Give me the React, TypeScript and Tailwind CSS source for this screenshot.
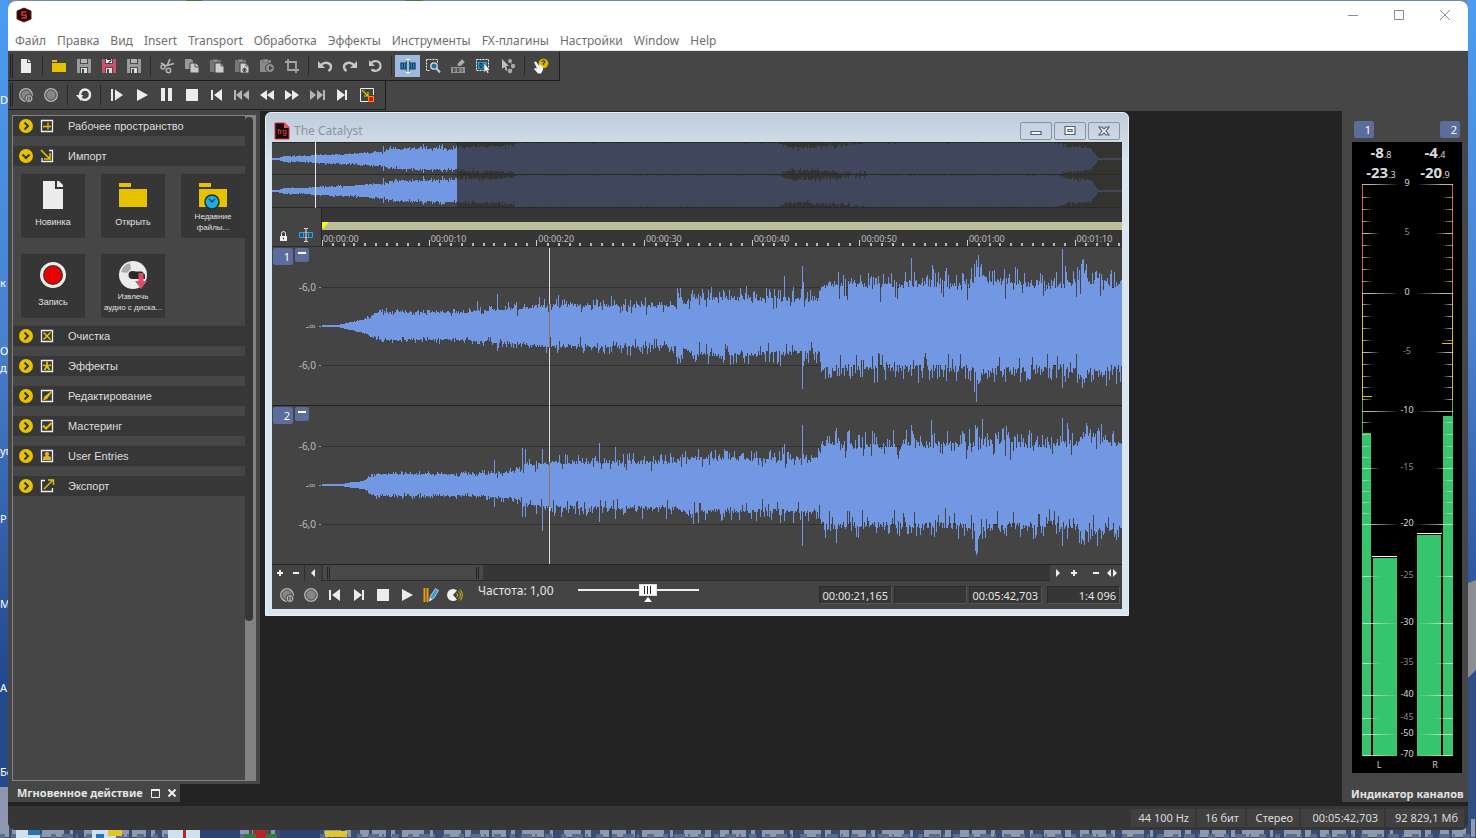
import { useState } from 'react';
import type { ReactNode } from 'react';

const UI = 'font-["Noto_Sans","Open_Sans",sans-serif]';

/* ---------- icons ---------- */

function Icon({ children, size = 16 }: { children: ReactNode; size?: number }) {
  return (
    <svg width={size} height={size} viewBox="0 0 16 16" fill="none" aria-hidden="true" className="shrink-0">
      {children}
    </svg>
  );
}

const NewFile = () => (
  <Icon>
    <path d="M3 1h6v4h4v10H3z" fill="#ececec" />
    <path d="M10 1l3 3h-3z" fill="#ececec" />
  </Icon>
);

const Folder = () => (
  <Icon>
    <path d="M1 2h5v2H1zM1 5h14v9H1z" fill="#e6c200" />
  </Icon>
);

const Floppy = ({ color = '#9b9b9b', mark = false }: { color?: string; mark?: boolean }) => (
  <Icon>
    <path d="M1 1h14v14H1z" fill={color} />
    <path d="M4 1h8v5H4zM4 9h8v6H4z" fill="#4a4a4a" />
    <path d="M5 1h6v4H5z" fill={mark ? '#fff' : '#b5b5b5'} />
    <path d="M5 10h6v5H5z" fill="#ddd" />
    <path d="M6 11h2v4H6z" fill="#444" />
    {mark && <path d="M6 1.500h4v2H8V6" stroke="#222" />}
  </Icon>
);

const Cut = () => (
  <Icon>
    <path d="M8 8L11 1M6 8l9-2.500M7 8L2 5" stroke="#b4b4b4" strokeWidth="1.800" />
    <circle cx="4" cy="9" r="2" stroke="#b4b4b4" strokeWidth="1.500" />
    <circle cx="9.500" cy="12.500" r="2.200" stroke="#b4b4b4" strokeWidth="1.500" />
  </Icon>
);

const Copy = () => (
  <Icon>
    <path d="M1 1h6l2 2v8H1z" fill="#999" />
    <path d="M6 5h6l3 3v7H6z" fill="#c9c9c9" stroke="#444" />
    <path d="M11 5v4h4" stroke="#555" />
  </Icon>
);

const Paste = ({ kind }: { kind?: 'special' | 'play' }) => (
  <Icon>
    <path d="M1 2h3V1h5v1h3v12H1z" fill={kind === 'play' ? '#8a8a8a' : '#777'} />
    <path d="M4 2h5v2H4z" fill="#aaa" stroke="#444" strokeWidth=".5" />
    {kind !== 'play' && <path d="M6 5h6l3 3v7H6z" fill="#cfcfcf" stroke="#444" />}
    {kind !== 'play' && <path d="M12 5v3h3" stroke="#555" />}
    {kind === 'special' && <path d="M8 12h5M10.500 9.500v5M9 10l3 4M12 10l-3 4" stroke="#333" strokeWidth=".8" />}
    {kind === 'play' && <circle cx="11" cy="10" r="4.500" fill="#8f8f8f" stroke="#444" />}
    {kind === 'play' && <path d="M10 7.500v5l4-2.500z" fill="#444" />}
  </Icon>
);

const Crop = () => (
  <Icon>
    <path d="M4 1v11h11M1 4h11v11" stroke="#a4a4a4" strokeWidth="1.800" />
  </Icon>
);

const Undo = ({ flip = false }: { flip?: boolean }) => (
  <Icon>
    <g transform={flip ? 'matrix(-1 0 0 1 16 0)' : undefined}>
      <path d="M1 3v7h7z" fill="#c6c6c6" />
      <path d="M4 7c4-4 10-2 10 2 0 2-1 3-2.500 4" stroke="#c6c6c6" strokeWidth="2.400" />
    </g>
  </Icon>
);

const Revert = () => (
  <Icon>
    <path d="M2 2v6h6z" fill="#c6c6c6" />
    <path d="M4.500 5C7 1.500 13.500 3 13.500 8S8 14 4.500 11.500" stroke="#c6c6c6" strokeWidth="2.200" />
  </Icon>
);

const Loop = () => (
  <Icon>
    <path d="M0 8h7l-2 6z" fill="#ececec" />
    <path d="M4 8c0-7.500 10-7 10-.5 0 5-5 6.500-8.500 4.500" stroke="#ececec" strokeWidth="2.400" />
  </Icon>
);

const EditTool = () => (
  <Icon>
    <path d="M1 5h5v6H1zM10 5h5v6h-5z" fill="#1d8fd6" stroke="#16344c" strokeWidth="1.200" />
    <path d="M6 5h4v6H6z" fill="#1d8fd6" />
    <path d="M3.500 6v4M12.500 6v4" stroke="#16344c" strokeWidth="1.200" />
    <path d="M8 2v12" stroke="#16344c" strokeWidth="3" />
    <path d="M6 1.500h1.500L8 2l.5-.5H10M8 2v12M6 14.500h1.500L8 14l.5.5H10" stroke="#fff" strokeWidth="1.300" />
  </Icon>
);

const MagnifyTool = () => (
  <Icon>
    <path d="M1.500 1.500h11v4M1.500 1.500v11h4" stroke="#eee" strokeDasharray="2 1" />
    <circle cx="9" cy="8" r="3.200" fill="#1f6f95" stroke="#dcdcdc" strokeWidth="1.300" />
    <path d="M11.500 10.500L15 14.500" stroke="#a8cfdf" strokeWidth="2" />
  </Icon>
);

const PencilTool = () => (
  <Icon>
    <path d="M1 9h14v6H1z" fill="#929292" />
    <path d="M3.500 10.500v3h1.500v-3zM7.500 10.500v3h1.500v-3zM12 10v4" stroke="#444" />
    <path d="M7 8l1-3 4-4 3 3-4 4z" fill="#adadad" stroke="#444" strokeWidth=".5" />
  </Icon>
);

const EventTool = () => (
  <Icon>
    <path d="M1.500 1.500h12v11h-12z" stroke="#f2f2f2" strokeDasharray="2 1" />
    <path d="M3 4h9v7H3z" fill="#1f9ad6" />
    <path d="M5 5.500v4h2v-4z" stroke="#103040" />
    <path d="M9 5v9.500l2-2 1.500 3 1.500-1-1.500-2.500H15z" fill="#fff" stroke="#333" strokeWidth=".5" />
  </Icon>
);

const EnvelopeTool = () => (
  <Icon>
    <path d="M2 1v10l2.500-2L6 13l1.500-1L6 8h3z" fill="#c0c0c0" />
    <path d="M9 3l3 3 2 2-3 4" stroke="#888" />
    <circle cx="10" cy="3" r="2" fill="#aaa" />
    <circle cx="13" cy="8" r="2.200" fill="#aaa" />
    <circle cx="10" cy="13" r="2.200" fill="#aaa" />
  </Icon>
);

const HelpTool = () => (
  <Icon>
    <circle cx="10.500" cy="5.500" r="4.800" fill="#d9ba00" />
    <path d="M9 4c0-2 3.200-1.800 3 0L10.500 5.500V7" stroke="#40391a" strokeWidth="1.200" />
    <path d="M1 4l2-.5 3 4 1-1 3 2.500v3L8 15.500H5L1 11l1-1 2 .5z" fill="#f3f3f3" />
  </Icon>
);

const RecordDot = ({ paused = false }: { paused?: boolean }) => (
  <Icon>
    <circle cx="8" cy="8" r="6.300" fill="#868686" stroke="#b4b4b4" strokeWidth="1.300" />
    <circle cx="8" cy="8" r="5" stroke="#555" />
    {paused && <circle cx="11" cy="11.500" r="4" fill="#b4b4b4" stroke="#444" />}
    {paused && <path d="M9.800 9.500v4M12.200 9.500v4" stroke="#444" strokeWidth="1.200" />}
  </Icon>
);

const shapes: Record<string, string> = {
  playAll: 'M2 2h2v12H2zM6 2.500v11L14 8z',
  play: 'M3 2v12l11-6z',
  pause: 'M2 1h4v13H2zM9 1h4v13H9z',
  stop: 'M2 2h12v12H2z',
  start: 'M2 3h2v10H2zM13 2v12L5 8z',
  prev: 'M0 3h2v10H0zM8 3v10L2 8zM15 3v10L9 8z',
  rewind: 'M8 3v10L1 8zM15 3v10L8 8z',
  forward: 'M1 3v10l7-5zM8 3v10l7-5z',
  next: 'M1 3v10l6-5zM8 3v10l6-5zM14 3h2v10h-2z',
  end: 'M3 2v12l8-6zM11 3h2v10h-2z',
};

const Shape = ({ name, color = '#ececec' }: { name: string; color?: string }) => (
  <Icon>
    <path d={shapes[name]} fill={color} />
  </Icon>
);

const PlayMode = () => (
  <Icon>
    <path d="M1.500 8V1.500h13V8M1.500 8v6.500H9" stroke="#eee" />
    <path d="M3 3l6 6M9 5v4H5" stroke="#e6c200" strokeWidth="1.200" />
    <path d="M9.500 9.500h5v5h-5z" fill="#f00" stroke="#f2a000" />
  </Icon>
);

const Pencils = () => (
  <Icon>
    <path d="M1.500 1v14M4.500 1v14" stroke="#e89a12" strokeWidth="2" />
    <path d="M6.500 14l1-5 5-7.500 3 2L11 11z" fill="#3d9fd6" stroke="#dfeaf0" strokeWidth=".7" />
    <path d="M6.500 14l.5-3 2 1.500z" fill="#fff" />
  </Icon>
);

const Scrub = () => (
  <Icon>
    <path d="M10 3.500A6 6 0 1 0 10 12.500L6 8z" fill="#f0f0f0" />
    <path d="M9.500 6c1.500 1 1.500 3 0 4M11.500 4c2.500 2 2.500 6 0 8M13 2.500c3 3 3 8 0 11" stroke="#d9ba00" />
  </Icon>
);

/* ---------- toolbars ---------- */

type Tool = { label: string; icon: ReactNode; active?: boolean } | 'sep';

const mainTools: Tool[] = [
  { label: 'Новый', icon: <NewFile /> },
  'sep',
  { label: 'Открыть', icon: <Folder /> },
  { label: 'Сохранить', icon: <Floppy /> },
  { label: 'Сохранить как', icon: <Floppy color="#d2506c" mark /> },
  { label: 'Сохранить все', icon: <Floppy /> },
  'sep',
  { label: 'Вырезать', icon: <Cut /> },
  { label: 'Копировать', icon: <Copy /> },
  { label: 'Вставить', icon: <Paste /> },
  { label: 'Вставить особо', icon: <Paste kind="special" /> },
  { label: 'Воспроизвести буфер', icon: <Paste kind="play" /> },
  { label: 'Обрезать', icon: <Crop /> },
  'sep',
  { label: 'Отменить', icon: <Undo /> },
  { label: 'Вернуть', icon: <Undo flip /> },
  { label: 'Повторить', icon: <Revert /> },
  'sep',
  { label: 'Редактирование', icon: <EditTool />, active: true },
  { label: 'Масштаб', icon: <MagnifyTool /> },
  { label: 'Карандаш', icon: <PencilTool /> },
  { label: 'Событие', icon: <EventTool /> },
  { label: 'Огибающая', icon: <EnvelopeTool /> },
  'sep',
  { label: 'Что это?', icon: <HelpTool /> },
];

const transportTools: Tool[] = [
  { label: 'Подготовить запись', icon: <RecordDot paused /> },
  { label: 'Запись', icon: <RecordDot /> },
  'sep',
  { label: 'Повтор', icon: <Loop /> },
  'sep',
  { label: 'Воспроизвести всё', icon: <Shape name="playAll" /> },
  { label: 'Воспроизвести', icon: <Shape name="play" /> },
  { label: 'Пауза', icon: <Shape name="pause" /> },
  { label: 'Стоп', icon: <Shape name="stop" /> },
  { label: 'В начало', icon: <Shape name="start" /> },
  { label: 'Предыдущий', icon: <Shape name="prev" color="#b5b5b5" /> },
  { label: 'Назад', icon: <Shape name="rewind" /> },
  { label: 'Вперёд', icon: <Shape name="forward" /> },
  { label: 'Следующий', icon: <Shape name="next" color="#b5b5b5" /> },
  { label: 'В конец', icon: <Shape name="end" /> },
  { label: 'Режим', icon: <PlayMode /> },
];

function Toolbar({ tools }: { tools: Tool[] }) {
  return (
    <div role="toolbar" className="flex h-[29px] w-fit items-center border-r border-b border-[#1e1e1e] bg-[#444] pr-1.5">
      <div className="ml-0.5 h-6 w-[3px] border-x border-[#222]" />
      {tools.map((tool, i) =>
        tool === 'sep' ? (
          <div key={i} className="flex w-2 justify-center">
            <div className="h-5 w-px bg-[#2a2a2a]" />
          </div>
        ) : (
          <button
            key={i}
            aria-label={tool.label}
            className={`flex h-[22px] w-[25px] items-center justify-center ${tool.active ? 'bg-[#9db9de]' : ''}`}
          >
            {tool.icon}
          </button>
        )
      )}
    </div>
  );
}

/* ---------- left panel ---------- */

const sectionMarks: Record<string, ReactNode> = {
  workspace: <path d="M4 8.500h8M9 4.500v7" stroke="#e6c200" strokeWidth="1.300" />,
  clean: <path d="M4.500 4.500l7 7M11.500 4.500l-7 7" stroke="#e6c200" strokeWidth="1.500" />,
  fx: <path d="M8 3.500v5M8 8L4 7M8 8l4-1M8 8l-2.500 4M8 8l2.500 4" stroke="#e6c200" strokeWidth="1.800" />,
  edit: <path d="M4 12.500l1.500-4L12.500 3 13 4l-5 7z" fill="#e6c200" />,
  master: <path d="M4 7.500l3 3L12.500 5" stroke="#e6c200" strokeWidth="2" />,
  user: <path d="M8 4a2 2 0 0 1 1 3.800L12 9v3H4V9l3-1.200A2 2 0 0 1 8 4z" fill="#e0b030" />,
};

function SectionIcon({ kind }: { kind: string }) {
  if (kind === 'import') {
    return (
      <Icon>
        <path d="M10 2.500h3.500v11H3V10" stroke="#eee" strokeWidth="1.300" />
        <path d="M2 2l8.500 8.500M11 5v6H5" stroke="#e6c200" strokeWidth="1.600" />
      </Icon>
    );
  }
  if (kind === 'export') {
    return (
      <Icon>
        <path d="M6 2.500H2.500v11h11V10" stroke="#eee" strokeWidth="1.300" />
        <path d="M5 11l9-9M9 2h5.500v5" stroke="#e6c200" strokeWidth="1.400" />
      </Icon>
    );
  }
  return (
    <Icon>
      <path d="M2.500 2.500h11v11h-11z" stroke="#eee" strokeWidth="1.300" />
      {sectionMarks[kind]}
    </Icon>
  );
}

function SectionHeader({ kind, title, open = false }: { kind: string; title: string; open?: boolean }) {
  return (
    <button
      aria-expanded={open}
      className="flex h-5 w-full items-center bg-[#373737] pl-1.5 text-left text-[11px] leading-5 text-[#dedede]"
    >
      <Icon>
        <circle cx="7" cy="8" r="7" fill="#e6c200" />
        <path d={open ? 'M3.500 6.500L7 10l3.500-3.500' : 'M5.500 4.500L9 8l-3.500 3.500'} stroke="#333" strokeWidth="2" />
      </Icon>
      <span className="mr-[13px] ml-1 flex">
        <SectionIcon kind={kind} />
      </span>
      {title}
    </button>
  );
}

const tiles = [
  {
    lines: ['Новинка'],
    icon: (
      <svg width="32" height="32" viewBox="0 0 32 32" fill="none">
        <path d="M6 2h12v8h8v20H6z" fill="#ececec" />
        <path d="M20 2h2l4 4v2h-6z" fill="#ececec" />
      </svg>
    ),
  },
  {
    lines: ['Открыть'],
    icon: (
      <svg width="32" height="32" viewBox="0 0 32 32">
        <path d="M2 4h12v4H2zM2 10h28v18H2z" fill="#e6c200" />
      </svg>
    ),
  },
  {
    lines: ['Недавние', 'файлы...'],
    icon: (
      <svg width="32" height="32" viewBox="0 0 32 32" fill="none">
        <path d="M2 4h12v4H2zM2 10h28v18H2z" fill="#e6c200" />
        <circle cx="15" cy="23" r="7" fill="#16b0e6" stroke="#2b2b2b" strokeWidth="1.500" />
        <path d="M12 20l3 3 3-3" stroke="#1c3b4a" strokeWidth="1.500" />
      </svg>
    ),
  },
  {
    lines: ['Запись'],
    icon: (
      <svg width="32" height="32" viewBox="0 0 32 32" fill="none">
        <circle cx="16" cy="16" r="11.500" fill="#333" stroke="#ececec" strokeWidth="3" />
        <circle cx="16" cy="16" r="9" fill="#e90000" />
      </svg>
    ),
  },
  {
    lines: ['Извлечь', 'аудио с диска...'],
    icon: (
      <svg width="32" height="32" viewBox="0 0 32 32" fill="none">
        <circle cx="16" cy="16" r="14" fill="#ececec" />
        <path d="M4 13a13 13 0 0 1 9-9l1 6-4 4z" fill="#aaa" />
        <circle cx="15.500" cy="16" r="4" fill="#2b2b2b" />
        <path d="M15 12.500h10l3 3V20H15z" fill="#2b2b2b" />
        <path d="M21.500 14h5v8h3.500l-6 8-6-8h3.500z" fill="#d9506c" />
      </svg>
    ),
  },
];

const sections = [
  ['clean', 'Очистка'],
  ['fx', 'Эффекты'],
  ['edit', 'Редактирование'],
  ['master', 'Мастеринг'],
  ['user', 'User Entries'],
  ['export', 'Экспорт'],
];

function QuickStart() {
  return (
    <aside className="flex w-[252px] shrink-0 flex-col pb-1 font-['Liberation_Sans',Arial,sans-serif]">
      <div className="flex flex-1 bg-[#464646] p-1 pb-[3px]">
        <div className="flex w-full border border-[#828282]">
          <div className="flex flex-1 flex-col gap-2.5 overflow-hidden">
            <SectionHeader kind="workspace" title="Рабочее пространство" />
            <div>
              <SectionHeader kind="import" title="Импорт" open />
              <div className="mt-2 mb-[-2px] grid grid-cols-[64px_64px_64px] gap-4 pl-2">
                {tiles.map((tile) => (
                  <button
                    key={tile.lines[0]}
                    className={`flex h-16 flex-col items-center justify-center bg-[#363636] text-[#e0e0e0] ${tile.lines.length > 1 ? '' : 'gap-1 pb-1'}`}
                  >
                    {tile.icon}
                    <span
                      className={`whitespace-nowrap ${tile.lines.length > 1 ? 'text-[8px] leading-[11px]' : 'text-[9px] leading-[14px]'}`}
                    >
                      {tile.lines.map((line) => (
                        <span key={line} className="block">
                          {line}
                        </span>
                      ))}
                    </span>
                  </button>
                ))}
              </div>
            </div>
            {sections.map(([kind, title]) => (
              <SectionHeader key={kind} kind={kind} title={title} />
            ))}
          </div>
          <div className="w-2.5 bg-[#828282] pt-px">
            <div className="h-[76%] w-2 rounded-full bg-[#373737]" />
          </div>
        </div>
      </div>
      <div className="flex h-[18px] w-fit items-center gap-2 bg-[#464646] pr-1 pl-[9px]">
        <span className={`text-[11px] leading-[18px] font-bold text-[#e4e4e4] ${UI}`}>Мгновенное действие</span>
        <button aria-label="Развернуть" className="flex">
          <svg width="9" height="9" viewBox="0 0 9 9" fill="none" stroke="#eee">
            <path d="M.5 1.500h8v7h-8z" />
            <path d="M0 1h9" strokeWidth="2" />
          </svg>
        </button>
        <button aria-label="Закрыть панель" className="flex">
          <svg width="8" height="8" viewBox="0 0 8 8" stroke="#eee" strokeWidth="2">
            <path d="M.5.5l7 7M7.500.5l-7 7" />
          </svg>
        </button>
      </div>
    </aside>
  );
}

/* ---------- waveforms ---------- */

type Point = [number, number];

function random(seed: number) {
  let s = seed;
  return () => {
    s = (s * 1664525 + 1013904223) >>> 0;
    return s / 4294967296;
  };
}

function levelAt(points: Point[], x: number) {
  for (let i = 1; i < points.length; i++) {
    const [x0, y0] = points[i - 1];
    const [x1, y1] = points[i];
    if (x <= x1) return y0 + ((y1 - y0) * (x - x0)) / (x1 - x0);
  }
  return points[points.length - 1][1];
}

function wavePath(
  mid: number,
  from: number,
  to: number,
  points: Point[],
  spikes: [number, number, number][],
  rough: Point[],
  seed: number
) {
  const rnd = random(seed);
  const jitter = (base: number, k: number) => {
    const r = rnd();
    let v = base * (1 + (rnd() - 0.5) * 0.18 * k);
    if (r > 0.72) v += Math.min(12, base * rnd() * 0.4 * k);
    else if (r < 0.14) v -= Math.min(14, base * rnd() * 0.4 * k);
    return Math.max(1, Math.round(v));
  };
  let d = '';
  for (let x = from; x < to; x++) {
    const base = levelAt(points, x);
    const k = levelAt(rough, x);
    let up = jitter(base, k);
    let down = jitter(base, k);
    const spike = spikes.find((s) => s[0] === x);
    if (spike) {
      up = Math.max(up, spike[1]);
      down = Math.max(down, spike[2]);
    }
    d += `M${x} ${mid - up}h1V${mid + down}h-1z`;
  }
  return d;
}

const roughness: Point[] = [[0, 0.3], [45, 0.6], [140, 0.7], [180, 1], [800, 1]];

const leftLevels: Point[] = [
  [0, 1], [16, 1], [24, 3], [34, 5], [45, 8], [53, 13], [60, 14], [140, 13], [155, 15], [200, 18],
  [226, 21], [353, 20], [356, 32], [362, 23], [372, 28], [420, 28], [497, 26], [499, 42], [540, 41],
  [652, 43], [655, 55], [662, 46], [735, 41], [755, 44], [762, 53], [768, 43], [780, 49], [790, 41], [800, 43],
];
const rightLevels: Point[] = [
  [0, 1], [18, 1], [25, 2], [41, 4], [47, 8], [53, 11], [160, 11], [185, 13], [195, 14], [200, 20],
  [226, 22], [300, 23], [353, 23], [360, 27], [420, 26], [497, 26], [499, 42], [540, 39], [652, 41],
  [655, 54], [662, 43], [730, 39], [755, 42], [760, 50], [790, 41], [800, 43],
];

const leftWave = wavePath(
  79, 0, 800, leftLevels,
  [
    [155, 25, 18], [175, 32, 25], [236, 31, 24], [289, 30, 26], [355, 38, 38], [358, 38, 36], [370, 36, 26], [424, 40, 28],
    [462, 50, 30], [480, 60, 63], [481, 44, 40], [589, 68, 50], [610, 61, 50], [624, 58, 44], [652, 62, 66], [654, 66, 76],
    [656, 71, 58], [740, 77, 62], [743, 60, 56], [760, 66, 62], [764, 62, 52],
  ],
  roughness, 11
);
const rightWave = wavePath(
  238, 0, 800, rightLevels,
  [
    [172, 25, 22], [200, 37, 32], [203, 36, 32], [220, 36, 46], [277, 42, 37], [293, 38, 34], [462, 41, 36], [480, 60, 61],
    [514, 57, 58], [589, 60, 48], [609, 65, 50], [653, 60, 66], [654, 56, 70], [655, 58, 68], [660, 66, 54], [684, 59, 50],
    [740, 67, 61], [745, 62, 54], [779, 61, 50],
  ],
  roughness, 29
);

const overviewLevels: Point[] = [
  [0, 1], [6, 1], [12, 3], [36, 3], [42, 4], [78, 5], [90, 6], [112, 7], [118, 10], [185, 11], [186, 12], [220, 12],
  [240, 13], [244, 16], [505, 16], [515, 12], [530, 11], [565, 13], [600, 16], [785, 16], [795, 12], [818, 11],
  [826, 1], [850, 1],
];
const overviewRough: Point[] = [
  [0, 0.8], [186, 0.6], [240, 0.5], [245, 0.2], [500, 0.2], [520, 0.7], [590, 0.5], [600, 0.2], [780, 0.2], [800, 0.6],
  [820, 0.2], [850, 0],
];
const overview = (mid: number, from: number, to: number, seed: number) =>
  wavePath(mid, from, to, overviewLevels, [[111, 13, 12], [151, 15, 14], [170, 15, 13]], overviewRough, seed);

function Overview() {
  return (
    <svg viewBox="0 0 850 66" preserveAspectRatio="none" shapeRendering="crispEdges" className="block h-[66px] w-full bg-[#444]">
      <path d="M185 0h665v66H185z" fill="#333432" />
      <path d={overview(17, 0, 185, 3) + overview(49, 0, 185, 5)} fill="#7297e3" />
      <path d={overview(17, 185, 850, 7) + overview(49, 185, 850, 9)} fill="#40475c" />
      <path d="M0 0h850v1H0zM0 32h850v1H0zM0 65h850v1H0z" fill="#262b28" />
      <path d="M43 0h1v66h-1z" fill="#e8e8e8" />
    </svg>
  );
}

/* ---------- audio window ---------- */

const marks = ['00:00:00', '00:00:10', '00:00:20', '00:00:30', '00:00:40', '00:00:50', '00:01:00', '00:01:10'];
const VISIBLE_SECONDS = 74.3;

function Ruler() {
  const seconds = Array.from({ length: 75 }, (_, i) => i);
  return (
    <div className="grid h-[39px] grid-cols-[50px_minmax(0,1fr)] border-b border-[#2c2c2c] bg-[#363636]">
      <div className="flex items-end justify-between border-r border-[#222] bg-[#444] pr-[7px] pb-1 pl-1.5">
        <svg width="11" height="12" viewBox="0 0 11 12" fill="none">
          <path d="M2 6h7v5H2z" fill="#eee" />
          <path d="M3.500 6V3.500a2 2 0 0 1 4 0V6" stroke="#eee" />
          <path d="M5 7.500h1v2H5z" fill="#444" />
        </svg>
        <svg width="16" height="14" viewBox="0 0 16 14" fill="none">
          <path d="M1.500 4.500h4v5h-4zM10.500 4.500h4v5h-4z" stroke="#3d9fcf" fill="#22536b" />
          <path d="M5 4.500h6M5 9.500h6" stroke="#3d9fcf" />
          <path d="M6 .5h1.500L8 1l.5-.5H10M8 1v12M6 13.500h1.500L8 13l.5.5H10" stroke="#eee" />
        </svg>
      </div>
      <div className="overflow-hidden pt-3.5">
        <div className="h-2 bg-[#bcbe9c]">
          <svg width="8" height="8" viewBox="0 0 8 8">
            <path d="M0 0h7L0 7z" fill="#ff0" />
          </svg>
        </div>
        <div className="relative h-4">
          <svg viewBox="0 0 800 16" preserveAspectRatio="none" shapeRendering="crispEdges" className="absolute inset-0 h-4 w-full">
            {seconds.map((s) => {
              const x = Math.round((s * 800) / VISIBLE_SECONDS);
              return s % 10 === 0 ? (
                <path key={s} d={`M${Math.max(0, x - 1)} 10h1v6h-1z`} fill="#ccc" />
              ) : (
                <path key={s} d={`M${x - 1} 13h2v3h-2z`} fill="#bbb" />
              );
            })}
          </svg>
          <div className="relative flex">
            {marks.map((mark) => (
              <span
                key={mark}
                className={`shrink-0 pl-px text-[9px] leading-[17px] text-[#bdbdbd] ${UI}`}
                style={{ width: `${1000 / VISIBLE_SECONDS}%` }}
              >
                {mark}
              </span>
            ))}
          </div>
        </div>
      </div>
    </div>
  );
}

function ChannelBadge({ n }: { n: number }) {
  return (
    <span className={`h-[17px] w-5 rounded-xs bg-[#5c6c9b] pr-[3px] text-right text-[11px] leading-[17px] text-white ${UI}`}>
      {n}
    </span>
  );
}

function ChannelGutter({ n }: { n: number }) {
  return (
    <div className="h-[159px] border-b border-[#222]">
      <div className="flex h-[21px] gap-0.5 pt-px pl-px">
        <ChannelBadge n={n} />
        <button aria-label={`Свернуть канал ${n}`} className="flex h-3.5 w-3.5 justify-center rounded-xs bg-[#5c6c9b] pt-1">
          <span className="h-0.5 w-2 bg-white" />
        </button>
      </div>
      {['-6,0', '-∞', '-6,0'].map((label, i) => (
        <div key={i} className={`flex h-[39px] items-center justify-end gap-[3px] pr-px text-[10px] text-[#bbb] ${UI}`}>
          {label}
          <span className="h-px w-0.5 bg-[#999]" />
        </div>
      ))}
    </div>
  );
}

function Tracks() {
  return (
    <div className="grid h-[318px] grid-cols-[50px_minmax(0,1fr)] overflow-hidden bg-[#444]">
      <div className="overflow-hidden">
        <ChannelGutter n={1} />
        <ChannelGutter n={2} />
      </div>
      <svg viewBox="0 0 800 318" preserveAspectRatio="none" shapeRendering="crispEdges" className="block h-[318px] w-full">
        <path d="M0 40h800v1H0zM0 118h800v1H0zM0 199h800v1H0zM0 277h800v1H0z" fill="#303030" />
        <path d="M0 158h800v1H0zM0 317h800v1H0z" fill="#222" />
        <path d={leftWave + rightWave} fill="#7297e3" />
        <path d="M227 1h1v316h-1z" fill="#dcdcdc" />
        <path d="M227 57h1v44h-1zM227 215h1v45h-1z" fill="#8c7d58" />
      </svg>
    </div>
  );
}

function ScrollGlyph({ label, d }: { label: string; d: string }) {
  return (
    <button aria-label={label} className="flex h-4 w-4 items-center justify-center">
      <svg width="10" height="8" viewBox="0 0 10 8" fill="#eee">
        <path d={d} />
      </svg>
    </button>
  );
}

function ScrollRow() {
  return (
    <div className="flex h-4 items-center border-b border-[#2a2a2a] bg-[#363636]">
      <div className="flex items-center bg-[#444]">
        <ScrollGlyph label="Увеличить по вертикали" d="M4 1h2v2h2v2H6v2H4V5H2V3h2z" />
        <ScrollGlyph label="Уменьшить по вертикали" d="M2 3h6v2H2z" />
        <div className="h-4 w-px bg-[#2c2c2c]" />
        <ScrollGlyph label="Прокрутить влево" d="M7 0v8L3 4z" />
      </div>
      <div className="ml-0.5 flex h-[15px] w-40 items-center justify-between bg-[#484848] px-1">
        <div className="h-3 w-[3px] border-x border-[#222]" />
        <div className="h-3 w-[3px] border-x border-[#222]" />
      </div>
      <div className="ml-auto flex items-center bg-[#444] pr-0.5">
        <ScrollGlyph label="Прокрутить вправо" d="M3 0v8l4-4z" />
        <ScrollGlyph label="Увеличить" d="M4 1h2v2h2v2H6v2H4V5H2V3h2z" />
        <div className="w-1.5" />
        <ScrollGlyph label="Уменьшить" d="M2 3h6v2H2z" />
        <ScrollGlyph label="По ширине" d="M4 0v8L0 4zM6 0v8l4-4z" />
      </div>
    </div>
  );
}

const clipTools = [
  { label: 'Подготовить запись', icon: <RecordDot paused /> },
  { label: 'Запись', icon: <RecordDot /> },
  { label: 'В начало', icon: <Shape name="start" /> },
  { label: 'В конец', icon: <Shape name="end" /> },
  { label: 'Стоп', icon: <Shape name="stop" /> },
  { label: 'Воспроизвести', icon: <Shape name="play" /> },
  { label: 'Обычный режим', icon: <Pencils /> },
  { label: 'Прослушивание', icon: <Scrub /> },
];

function TimeBox({ children }: { children?: ReactNode }) {
  return (
    <div
      className={`h-[18px] w-[73px] border border-[#2a2a2a] border-r-[#555] border-b-[#555] bg-[#363636] pr-[3px] text-right text-[11px] leading-[17px] text-[#e4e4e4] ${UI}`}
    >
      {children}
    </div>
  );
}

function ClipTransport() {
  const [rate, setRate] = useState(59);
  return (
    <div className="flex h-7 items-center bg-[#444] pl-[3px]">
      {clipTools.map((tool) => (
        <button key={tool.label} aria-label={tool.label} className="flex h-6 w-6 items-center justify-center">
          {tool.icon}
        </button>
      ))}
      <label htmlFor="rate" className={`mb-2 ml-[11px] w-[100px] text-[12px] leading-4 text-[#e4e4e4] ${UI}`}>
        Частота: 1,00
      </label>
      <div className="relative flex h-full w-[121px] items-start pt-[3px]">
        <input
          id="rate"
          type="range"
          value={rate}
          onChange={(e) => setRate(Number(e.target.value))}
          className="h-3 w-full appearance-none bg-[linear-gradient(#eee,#eee)] bg-[length:100%_2px] bg-center bg-no-repeat [&::-webkit-slider-thumb]:h-3 [&::-webkit-slider-thumb]:w-[18px] [&::-webkit-slider-thumb]:appearance-none [&::-webkit-slider-thumb]:border [&::-webkit-slider-thumb]:border-[#ddd] [&::-webkit-slider-thumb]:bg-[repeating-linear-gradient(90deg,#222_0_1px,#fff_1px_3px)] [&::-webkit-slider-thumb]:bg-white [&::-webkit-slider-thumb]:bg-[length:7px_8px] [&::-webkit-slider-thumb]:bg-center [&::-webkit-slider-thumb]:bg-no-repeat"
        />
        <svg width="8" height="6" viewBox="0 0 8 6" className="absolute top-4 left-[66px]">
          <path d="M4 0l4 5H0z" fill="#fff" />
        </svg>
      </div>
      <div className="ml-auto flex gap-0.5 pr-0.5">
        <TimeBox>00:00:21,165</TimeBox>
        <TimeBox />
        <TimeBox>00:05:42,703</TimeBox>
        <div className="w-px" />
        <TimeBox>1:4 096</TimeBox>
      </div>
    </div>
  );
}

function AudioWindow() {
  return (
    <section className="mt-px ml-[5px] w-[864px] max-w-full rounded-t-md border border-[#e9f1f8] bg-linear-to-b from-[#bfccda] via-[#dbe5f0] via-10% to-[#dbe5ef] px-1.5 pb-1.5">
      <header className="flex h-[29px] items-center gap-1 pt-1.5 pr-0.5 pl-0.5">
        <svg width="16" height="18" viewBox="0 0 16 18">
          <path d="M1 1h10l4 4v12H1z" fill="#1c0c0c" stroke="#d8343c" />
          <path d="M10 1h1l4 4v1h-5z" fill="#e4555b" />
          <text x="8" y="12" textAnchor="middle" fontFamily="Liberation Sans" fontSize="8" fill="#e4454b">
            frg
          </text>
        </svg>
        <h1 className={`text-[12px] leading-4 text-[#8b959e] ${UI}`}>The Catalyst</h1>
        <div className="ml-auto flex gap-0.5">
          {[
            ['Свернуть окно', 'M3 8.500h10v3H3z'],
            ['Развернуть окно', 'M3 3.500h10v8H3zM6 6.500h4v2H6z'],
            ['Закрыть окно', 'M3 4h3l2 2 2-2h3l-3 4 3 4h-3l-2-2-2 2H3l3-4z'],
          ].map(([label, d]) => (
            <button
              key={label}
              aria-label={label}
              className="flex h-[18px] w-8 items-center justify-center rounded-xs border border-[#8494ab]"
            >
              <svg width="16" height="16" viewBox="0 0 16 16" fill="#f5f8fb" stroke="#56606c" strokeWidth="1.200">
                <path d={d} />
              </svg>
            </button>
          ))}
        </div>
      </header>
      <Overview />
      <Ruler />
      <Tracks />
      <ScrollRow />
      <ClipTransport />
    </section>
  );
}

/* ---------- meters ---------- */

const scale: [string, number][] = [
  ['9', 1], ['5', 50], ['0', 110], ['-5', 169], ['-10', 228], ['-15', 285], ['-20', 341],
  ['-25', 393], ['-30', 440], ['-35', 480], ['-40', 512], ['-45', 535], ['-50', 551], ['-70', 572],
];
const fineTicks = [14, 26, 38, 62, 74, 86, 98, 121, 133, 145, 157, 181, 193, 204, 216, 239, 251, 263, 274, 297, 308, 319, 330];

function MeterScale() {
  return (
    <svg
      viewBox="0 0 110 590"
      className="block h-[590px] w-[110px] overflow-visible"
      fontFamily="Noto Sans, sans-serif"
    >
      <defs>
        <linearGradient id="fadeR">
          <stop offset="0.3" stopColor="#d8e4dc" />
          <stop offset="1" stopColor="#d8e4dc" stopOpacity="0.1" />
        </linearGradient>
        <linearGradient id="fadeL">
          <stop offset="0" stopColor="#d8e4dc" stopOpacity="0.1" />
          <stop offset="0.7" stopColor="#d8e4dc" />
        </linearGradient>
      </defs>
      <g shapeRendering="crispEdges">
        <path d="M10 1h1v109h-1zM100 1h1v109h-1z" fill="#d95a62" />
        <path d="M10 110h1v106h-1zM100 110h1v106h-1z" fill="#d9b92e" />
        <path d="M10 216h1v34h-1zM100 216h1v18h-1z" fill="#37b568" />
        <path d="M10 250h9v323h-9zM21 375h24v198H21zM65 352h24v221H65zM91 233h10v340H91z" fill="#36c46c" />
        <path d="M20 373h25v1H20zM65 350h25v1H65z" fill="#fff" />
        <path d="M10 213h10v1H10zM90 160h10v1H90z" fill="#e6c200" />
        {fineTicks.map((y) => (
          <g key={y} opacity="0.6">
            <rect x="10" y={y} width="10" height="1" fill="url(#fadeR)" />
            <rect x="91" y={y} width="10" height="1" fill="url(#fadeL)" />
          </g>
        ))}
        {scale.map(([label, y]) => {
          const w = Number(label) % 10 === 0 || label === '9' ? 35 : 17;
          return (
            <g key={label} opacity="0.8">
              <rect x="10" y={y} width={w} height="1" fill="url(#fadeR)" />
              <rect x={101 - w} y={y} width={w} height="1" fill="url(#fadeL)" />
            </g>
          );
        })}
      </g>
      {scale.map(([label, y]) => (
        <text
          key={label}
          x="55"
          y={y + 2}
          textAnchor="middle"
          fontSize="9"
          fill={Number(label) % 10 === 0 || label === '9' ? '#ddd' : '#8c8c8c'}
        >
          {label}
        </text>
      ))}
      <text x="27" y="585" textAnchor="middle" fontSize="9" fill="#ccc">L</text>
      <text x="83" y="585" textAnchor="middle" fontSize="9" fill="#ccc">R</text>
    </svg>
  );
}

function Reading({ whole, part }: { whole: string; part: string }) {
  return (
    <span className="w-1/2 text-center">
      <b className="text-[15px]">{whole}</b>
      <span className="text-[9px]">.{part}</span>
    </span>
  );
}

function Meters() {
  return (
    <aside className={`flex w-[126px] shrink-0 flex-col ${UI}`}>
      <div className="bg-[#464646] pt-2.5 pl-2.5">
        <div className="flex w-[110px] justify-between px-0.5">
          <ChannelBadge n={1} />
          <ChannelBadge n={2} />
        </div>
        <div className="mt-1 w-[110px] bg-black pl-0.5 text-[#dcdcdc]">
          <div className="flex h-[21px] leading-5">
            <Reading whole="-8" part="8" />
            <Reading whole="-4" part="4" />
          </div>
          <div className="flex h-5 leading-[19px]">
            <Reading whole="-23" part="3" />
            <Reading whole="-20" part="9" />
          </div>
          <div className="-ml-0.5">
            <MeterScale />
          </div>
        </div>
        <h2 className="-ml-px h-[29px] overflow-hidden pt-3 text-[11px] leading-[17px] font-bold whitespace-nowrap text-[#e4e4e4]">
          Индикатор каналов
        </h2>
      </div>
    </aside>
  );
}

/* ---------- application ---------- */

const menu = [
  'Файл', 'Правка', 'Вид', 'Insert', 'Transport', 'Обработка', 'Эффекты',
  'Инструменты', 'FX-плагины', 'Настройки', 'Window', 'Help',
];

const desktopLabels: [string, number][] = [
  ['D', 92], ['к', 275], ['О', 343], ['д', 360], ['уг', 443], ['Р', 511], ['М', 596], ['А', 680], ['Бе', 764],
];

function Desktop() {
  return (
    <div className="absolute inset-0 overflow-hidden bg-linear-to-b from-[#4a9df2] via-[#4a80d0] via-40% to-[#244a8e] to-80%">
      <svg viewBox="0 0 1476 838" preserveAspectRatio="none" className="absolute inset-0 h-full w-full">
        <path d="M8 0h1460v3H8z" fill="#6f8cae" />
        <path d="M405 0h18v2h-18zM186 0h16v2h-16z" fill="#3f7a4a" />
        <path d="M0 787h8v51H0z" fill="#8f97b0" />
        <path d="M1468 583l8-3v90l-8 8z" fill="#8b8f94" />
        <path d="M1468 680l8-10v168h-8z" fill="#2f4d80" />
        <path d="M0 828h1476v10H0z" fill="#3a4d70" />
        <path
          d="M0 828H1476"
          stroke="#8f98ac"
          strokeWidth="18"
          strokeDasharray="9 3 14 5 4 7 22 6 3 11 17 4 6 9"
        />
        <path
          d="M0 836H1476"
          stroke="#5d6b8a"
          strokeWidth="4"
          strokeDasharray="5 6 11 3 2 8 7 9"
        />
        <path d="M200 828h40v10h-40zM280 828h40v10h-40z" fill="#2d4570" />
        <path d="M16 830h24v8H16zM92 830h24v8H92zM168 830h32v8h-32z" fill="#cfe0ee" />
        <path d="M28 830h12v5H28zM96 834h8v4h-8z" fill="#1f76b8" />
        <path d="M108 830h14v6h-14zM325 831h22v6h-22z" fill="#e3c52a" />
        <path d="M183 828h3v10h-3zM253 830h14v8h-14z" fill="#b3262b" />
        <path d="M244 834h12v4h-12zM266 834h11v4h-11z" fill="#2f7d3c" />
      </svg>
      {desktopLabels.map(([text, y]) => (
        <span
          key={text}
          className={`absolute left-0 text-[11px] leading-4 text-white ${UI}`}
          style={{ top: y }}
        >
          {text}
        </span>
      ))}
    </div>
  );
}

const status = [
  { text: '44 100 Hz', width: 'w-16' },
  { text: '16 бит', width: 'w-12' },
  { text: 'Стерео', width: 'w-[52px]' },
  { text: '00:05:42,703', width: 'w-[83px]' },
  { text: '92 829,1 Мб', width: 'w-[78px]' },
];

export default function App() {
  return (
    <div className="relative h-screen min-h-[838px] overflow-hidden px-2 pt-px pb-2">
      <Desktop />
      <main className="relative flex h-full flex-col overflow-hidden rounded-lg bg-[#464646]">
        <header className="flex h-7 shrink-0 items-center bg-white pl-2">
          <svg width="16" height="16" viewBox="0 0 16 16" fill="none">
            <path d="M8 1l7 3v8l-7 3-7-3V4z" fill="#1a0808" stroke="#7a1518" />
            <path d="M10.500 5H6v3h4v3H5.500" stroke="#e0343a" strokeWidth="1.400" />
          </svg>
          <div className="ml-auto flex">
            {[
              ['Свернуть', 'M3 8.500h10'],
              ['Развернуть', 'M3.500 3.500h9v9h-9z'],
              ['Закрыть', 'M3 3l10 10M13 3L3 13'],
            ].map(([label, d]) => (
              <button key={label} aria-label={label} className="flex w-[46px] justify-center">
                <svg width="16" height="16" viewBox="0 0 16 16" fill="none" stroke="#8a8a8a">
                  <path d={d} />
                </svg>
              </button>
            ))}
          </div>
        </header>
        <nav className="flex h-[22px] shrink-0 gap-[11px] border-b border-[#e4e4e4] bg-white pl-[7px]">
          {menu.map((item) => (
            <button key={item} className={`pt-0.5 text-[12px] leading-[18px] text-[#6e6e6e] ${UI}`}>
              {item}
            </button>
          ))}
        </nav>
        <div className="shrink-0 bg-[#464646] py-px">
          <Toolbar tools={mainTools} />
          <Toolbar tools={transportTools} />
        </div>
        <div className="flex min-h-0 flex-1 bg-[#232323]">
          <QuickStart />
          <div className="min-w-0 flex-1">
            <AudioWindow />
          </div>
          <Meters />
        </div>
        <footer className="mt-auto flex h-6 shrink-0 items-center justify-end gap-0.5 bg-[#363636] pr-1">
          {status.map(({ text, width }) => (
            <div
              key={text}
              className={`h-[18px] bg-[#404040] pr-1.5 text-right text-[11px] leading-[18px] whitespace-nowrap text-[#dcdcdc] ${width} ${UI}`}
            >
              {text}
            </div>
          ))}
        </footer>
      </main>
    </div>
  );
}
